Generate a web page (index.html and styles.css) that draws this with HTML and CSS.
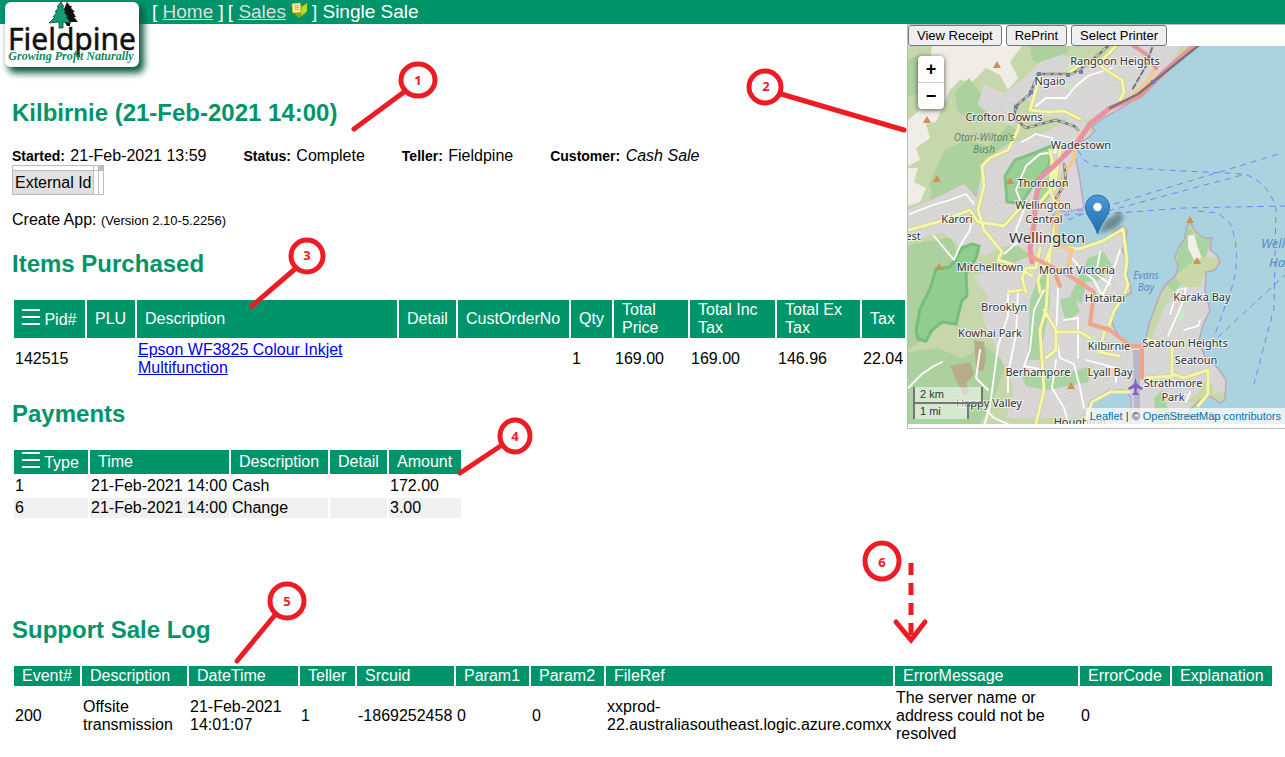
FILE: index.html
```html
<!DOCTYPE html>
<html lang="en">
<head>
<meta charset="utf-8">
<title>Single Sale</title>
<link rel="stylesheet" href="styles.css">
</head>
<body>
<header class="topbar">
  <a class="logo" href="#" aria-label="Fieldpine">
    <svg class="logo-art" viewBox="0 0 134 65">
      <path fill="#111" d="M62 0l3 4 2 0-1 2 4 4-2 0 3 5-2 0 4 5-8 0 0 4-3 0-6-10z"/>
      <path fill="#159a72" stroke="#0b4f3a" stroke-width="0.800" d="M56 0l-4 5 2 0-4 5 2 0-4 5 2 0-6 6 10-1 0 6 4 0 0-6 8 1-5-6 2 0-4-5 2 0-4-5 2 0z"/>
      <text class="logo-name" x="67" y="48" text-anchor="middle">Fieldpine</text>
      <text class="logo-tag" x="66" y="58" text-anchor="middle">Growing Profit Naturally</text>
    </svg>
  </a>
  <nav class="crumbs">
    <span>[ <a href="#">Home</a> ]</span>
    <span>[ <a href="#">Sales</a></span>
    <svg class="crumb-icon" viewBox="0 0 18 18">
      <path fill="#6fae1c" d="M8 3l5 2 4-3 0 9-8 6-4-3z"/>
      <path fill="#b7dd3c" d="M12 6l5-4 0 8-6 5z"/>
      <path fill="#fff6c8" stroke="#e8b820" stroke-width="1" d="M2 3l8-1 1 9-8 1z"/>
      <path stroke="#e59b2c" stroke-width="1" d="M4 5l5-.5M4 7l5-.5M4.500 9l5-.5"/>
    </svg>
    <span>] Single Sale</span>
  </nav>
</header>

<main class="page">
  <div class="upper">
    <div class="sale">
      <h2>Kilbirnie (21-Feb-2021 14:00)</h2>
      <div class="facts">
        <span><b>Started:</b> 21-Feb-2021 13:59</span>
        <span><b>Status:</b> Complete</span>
        <span><b>Teller:</b> Fieldpine</span>
        <span><b>Customer:</b> <i>Cash Sale</i></span>
      </div>
      <table class="ext">
        <tr class="ext-top"><td></td><td></td><td class="ext-fill"></td></tr>
        <tr><td class="ext-name">External Id</td><td></td><td></td></tr>
      </table>
      <p class="app">Create App: <small>(Version 2.10-5.2256)</small></p>

      <h2>Items Purchased</h2>
      <table class="grid items">
        <colgroup><col class="w71"><col class="w48"><col><col class="w57"><col class="w111"><col class="w41"><col class="w74"><col class="w85"><col class="w83"><col class="w43"></colgroup>
        <thead><tr>
          <th><svg class="burger" viewBox="0 0 18 16"><path d="M0 1h18M0 8h18M0 15h18"/></svg> Pid#</th>
          <th>PLU</th><th>Description</th><th>Detail</th><th>CustOrderNo</th><th>Qty</th><th>Total Price</th><th>Total Inc Tax</th><th>Total Ex Tax</th><th>Tax</th>
        </tr></thead>
        <tbody><tr>
          <td>142515</td><td></td><td class="desc"><a href="#">Epson WF3825 Colour Inkjet Multifunction</a></td><td></td><td></td><td>1</td><td>169.00</td><td>169.00</td><td>146.96</td><td>22.04</td>
        </tr></tbody>
      </table>

      <h2>Payments</h2>
      <table class="grid payments">
        <colgroup><col class="w74"><col class="w139"><col class="w97"><col class="w57"><col class="w72"></colgroup>
        <thead><tr>
          <th><svg class="burger" viewBox="0 0 18 16"><path d="M0 1h18M0 8h18M0 15h18"/></svg> Type</th>
          <th>Time</th><th>Description</th><th>Detail</th><th>Amount</th>
        </tr></thead>
        <tbody>
          <tr><td>1</td><td>21-Feb-2021 14:00</td><td>Cash</td><td></td><td>172.00</td></tr>
          <tr class="alt"><td>6</td><td>21-Feb-2021 14:00</td><td>Change</td><td></td><td>3.00</td></tr>
        </tbody>
      </table>
    </div>

    <aside class="side">
      <div class="actions">
        <button type="button">View Receipt</button>
        <button type="button">RePrint</button>
        <button type="button">Select Printer</button>
      </div>
      <div class="map">
        <svg class="map-art" viewBox="908 46 377 378" preserveAspectRatio="xMidYMid slice" role="img" aria-label="Map of Wellington">
          <defs>
            <pattern id="streets" width="13" height="11" patternUnits="userSpaceOnUse" patternTransform="rotate(22)">
              <rect width="13" height="11" fill="#d9d8d7"/>
              <path d="M0 3h13M4 0v11M0 8h9M9 3v8" stroke="#bfbebd" stroke-width="1.600" fill="none"/>
              <path d="M0 3h13M4 0v11M0 8h9M9 3v8" stroke="#ececec" stroke-width="0.800" fill="none"/>
            </pattern>
            <linearGradient id="pin" x1="0" y1="0" x2="0" y2="1">
              <stop offset="0" stop-color="#4a9bd3"/><stop offset="1" stop-color="#1d6bb0"/>
            </linearGradient>
            <filter id="soft"><feGaussianBlur stdDeviation="2"/></filter>
          </defs>
          <rect x="908" y="46" width="377" height="378" fill="#c6d7ab"/>
          <!-- open farmland -->
          <path fill="#f1ede6" d="M932 46L1022 46 1010 62 1018 78 1008 90 1000 75 986 68 972 82 960 80 950 90 942 108 936 122 926 124 930 138 916 148 920 160 908 166 908 120 922 108 920 92 934 88 944 74 930 62z"/>
          <path fill="#f1ede6" d="M908 168l10 0-4 14 12 6-6 14-12 4z"/>
          <!-- woodland -->
          <g fill="#add19e">
            <path d="M908 60l12-6 16 12 4 14-14 12-18 4z"/>
            <path d="M955 92l14-14 12 16 16 6-4 20-20 2-16-12z"/>
            <path d="M1030 46l40 0-6 14-18 8-14-8z"/>
            <path d="M945 150l20-10 24 6 20-22 10 8-18 26-20 14-4 30-12 6-10-12-20 2-6-14z"/>
            <path d="M935 182l26-16 18 14 4 34-14 8-20-14-20-4z"/>
            <path d="M1046 82l28 4 28-12 10 14-28 22-26-4z"/>
            <path d="M1120 46l20 0-4 18-14 14-8-14z"/>
            <path d="M908 245l44-8 8 24-24 34-10 44-18 10z"/>
            <path d="M908 352l30-4 24 10 24-12 20 18-12 34-14 26-72 0z"/>
            <path d="M1010 245l20 4-6 24-20 6-8-16z"/>
          </g>
          <!-- suburbs -->
          <g fill="url(#streets)">
            <path d="M1024 78l16-16 24-8 20 14 22-8 14-14 60 0-14 30-26 26-32 14-26 4-40-4-14-16-18 4-6-10z"/>
            <path d="M984 84l22 10 14 22-8 10-22-10-12-12z"/>
            <path d="M984 160l24-16 34-10 40-22 8 22-14 16 4 40 6 20-26 4 0 40-22 6-20-14-14 0-20 10-14-20z"/>
            <path d="M908 210l32-14 24-12 20 22 6 28-28 14-20-16-34 10z"/>
            <path d="M1000 268l26-10 34-10 36-4 28-14 6 60-18 24 0 14 40 10 12-30 30-40 14-20 14 16-10 60 10 34 18 14-8 18-34 8-20 20-172 0 8-30-18-40-14-30 6-20-14-22z"/>
          </g>
          <!-- parks and town belt -->
          <path fill="#9bcf95" stroke="#83c183" stroke-width="3" d="M1005 176l10-16 22-8 14-6-2 20-14 16-14 22-14-2z"/>
          <path fill="#8fce8e" stroke="#79bd7c" stroke-width="3" d="M962 248l10-4 7 2-3 12-10 16 1 22-5 4-6 24-14-2-10 8-6 11-8-2-2-8 4-22 10-20 6-20 14-2 6-8z"/>
          <g fill="#a9d3a0">
            <path d="M1044 180l10-8 4 14-14 18-10-4z"/>
            <path d="M1030 300l8-22 8-8 4 30-10 60-12 0z"/>
            <path d="M1088 258l16-6 8 14-12 14-14 2-4 22-12-8z"/>
            <path d="M1022 376l20-8 20 6 30-8-4 16-40 8-22-4z"/>
            <path d="M1060 300l14-4 6 16-14 10z"/>
            <path d="M1188 226l8 10 16 2-6 18-10 10-22 26-8-8 10-12 2-20z"/>
            <path d="M1154 398l8-8 6 20 0 14-12 0z"/>
          </g>
          <g fill="#c8e9c8"><path d="M1066 68l8-4 4 8-8 4z"/><path d="M1066 82l8 2-2 8-6-4z"/><path d="M1086 338l10-4 2 22-8-4z"/><path d="M1180 310l5-3-2 16-5-3z"/></g>
          <path fill="#b7ad8c" d="M974 340l10 2 2 16-3 14-7-4-1-14zM950 366l20-4 4 12-8 10 4 8-6 4-8-16z"/>
          <path fill="#c9d8a6" d="M1174 276l18-14 14-6 14 4-2 10-12 2-6 14-16 2zM1184 402l14-8 4-12 10 2 2 12-14 6z"/>
          <path fill="#f3efe6" d="M1188 236l6-2 4 14 4 10-8 2-6-12z"/>
          <!-- port and airport -->
          <path fill="#dbd5da" d="M1068 160l8-12 6 60-20 4-4-20z"/>
          <path fill="#d8d5dd" d="M1132 350l8 0 6 40 4 34-18 0z"/>
          <path fill="#b9b7cb" d="M1133 350l7 0 0 74-6 0z"/>
          <!-- harbour and bays -->
          <g fill="#aad3df" stroke="#b8a8c0" stroke-width="1.500">
            <path d="M1198 44L1175 63 1160 78 1145 92 1125 106 1105 117 1092 127 1095 131 1088 138 1076 144 1075 155 1080 180 1084 208 1067 212 1057 210 1052 217 1055 242 1065 248 1080 248 1095 244 1108 238 1115 231 1123 226 1127 230 1126 240 1122 250 1128 262 1127 275 1131 288 1131 293 1124 297 1120 303 1113 310 1112 321 1115 330 1120 337 1128 344 1142 346 1147 334 1149 324 1155 308 1160 294 1166 284 1176 275 1178 266 1175 258 1178 248 1185 238 1186 228 1190 222 1196 232 1204 238 1212 238 1210 250 1217 255 1220 262 1215 270 1206 272 1205 290 1210 310 1203 325 1199 340 1205 357 1218 368 1226 380 1225 400 1220 403 1210 396 1200 400 1190 410 1182 426 1290 426 1290 44z"/>
            <path d="M1084 426L1090 402 1108 391 1124 390 1131 397 1131 426z"/>
          </g>
          <g fill="none" stroke-linejoin="round" stroke-linecap="round">
            <!-- minor roads -->
            <g stroke="#fff" stroke-width="1.800">
              <path d="M1022 142l14-8 16 4 4 14-16 2-14 12-10 24 8 20-8 20 4 10-16 14"/>
              <path d="M934 236l20 24 6-14 10-16 2-12M910 214l20-8 20-6 16-6 8 10"/>
              <path d="M1008 290l0 26-10 30-8 60-6 20M1018 290l-2 44-8 40 0 18M1044 290l-10 20-4 40-6 16 20 4M1056 360l-4 28 12 20 4 14"/>
              <path d="M1058 288l-2 50 4 20 14 6 6 24 4 20M1072 258l10 12 12 10 8 16 8-16 10-30"/>
              <path d="M1036 106l10-8 20 0 10-12 12-10 24-8"/>
              <path d="M1168 336l14-32 4-16-8 2-8 24M1184 330l14-4 2-6"/>
              <path d="M908 388l14-14 12-8 8-4M984 408l10 10 14 6M1100 252l-4 22 14 10M1064 320l14-2 0 40M1086 360l30 8 0 14"/>
              <path d="M1186 402l4-10M980 350l-4 28 12 12"/>
            </g>
            <!-- secondary roads -->
            <g id="secondary" stroke="#c9cb86" stroke-width="4.200">
              <path d="M1116 46l-14 14-24 6-14 10"/>
              <path d="M1040 76l-4 14-6 20 18 2 16-1 16 8"/>
              <path d="M1020 118l-2 12-10 20-18 8-8 8 2 20-6 24 6 20 18 22-4 8 14 4 20 12"/>
              <path d="M908 230l30-8 32-12 8 12 26 4 16-18 16-8"/>
              <path d="M1096 62l10 8 16 10 2 12-4 8"/>
              <path d="M1034 210l16-20 2-30M1050 150l4 20-4 20 8 20-8 40-12 30 2 12M1060 150l-6 40"/>
              <path d="M1050 250l-4 60-6 20 4 60-8 34M1044 310l12 20 0 20-10 8M1056 332l24 0 10 6"/>
              <path d="M1026 292l-4-14 4-10 10 0 4-20M1008 292l14-2"/>
              <path d="M1055 246l24 3 24-8 20-12 2 16 2 16-2 14 3 10-6 14-8 12-5 14"/>
              <path d="M1105 330l-6 22 20 4M1084 424l8-22 18-10 20 0M1148 340l24 4 0 30 12 4 24-8 0 24-10 12M1145 378l28-2"/>
            </g>
            <g stroke="#f4f7a7" stroke-width="3">
              <path d="M1116 46l-14 14-24 6-14 10"/>
              <path d="M1040 76l-4 14-6 20 18 2 16-1 16 8"/>
              <path d="M1020 118l-2 12-10 20-18 8-8 8 2 20-6 24 6 20 18 22-4 8 14 4 20 12"/>
              <path d="M908 230l30-8 32-12 8 12 26 4 16-18 16-8"/>
              <path d="M1096 62l10 8 16 10 2 12-4 8"/>
              <path d="M1034 210l16-20 2-30M1050 150l4 20-4 20 8 20-8 40-12 30 2 12M1060 150l-6 40"/>
              <path d="M1050 250l-4 60-6 20 4 60-8 34M1044 310l12 20 0 20-10 8M1056 332l24 0 10 6"/>
              <path d="M1026 292l-4-14 4-10 10 0 4-20M1008 292l14-2"/>
              <path d="M1055 246l24 3 24-8 20-12 2 16 2 16-2 14 3 10-6 14-8 12-5 14"/>
              <path d="M1105 330l-6 22 20 4M1084 424l8-22 18-10 20 0M1148 340l24 4 0 30 12 4 24-8 0 24-10 12M1145 378l28-2"/>
            </g>
            <!-- primary roads -->
            <g stroke="#f6c98b" stroke-width="4">
              <path d="M1154 70l-6 12-20 18-20 10-18 14-12 14"/><path d="M1076 142l-2 16-12 20-4 20-2 40M1054 244l18 6-4 16"/>
            </g>
            <path stroke="#e892a2" stroke-width="5" d="M1196 44l-32 28-24 24-30 12-20 16-12 18-22 22-16 14-4 20-2 26-4 24 2 14"/>
            <path stroke="#e892a2" stroke-width="4" d="M1134 46l12 8 10 14"/>
            <path stroke="#f3a28b" stroke-width="4" d="M1030 256l20 10 20 10 24 16-4 32 20 6 20 16 12 0 0 32M1056 276l4 10"/>
            <!-- railway -->
            <path stroke="#777" stroke-width="2.500" d="M1038 74l34 0 16-10 20-18M1038 74l-8 20-14 12-2 12 12 10 30-8 18 6 4 4M1198 46l-40 32-20 16-28 14M1064 164l2 18-10 16"/>
            <path stroke="#ddd" stroke-width="1.200" stroke-dasharray="4 4" d="M1038 74l34 0 16-10 20-18M1038 74l-8 20-14 12-2 12 12 10 30-8 18 6 4 4M1064 164l2 18-10 16"/>
            <path stroke="#777" stroke-width="2" stroke-dasharray="5 3" d="M1152 48l-6 18-14 24"/>
            <!-- ferry routes -->
            <g stroke="#7b80f2" stroke-width="1" stroke-dasharray="6 5" stroke-linecap="butt">
              <path d="M1078 150l6 10 10 6 70 4 80 4q24 8 32 34l-2 100-20 76"/>
              <path d="M1114 204l168-51M1108 211l134-36M1104 214l80-6 101-2M1198 211l20 2 12 10q12 30 2 64l-18 50M1218 337l67-62"/>
              <path d="M1064 215l30-2M1066 209l26 2M1068 220l20-8"/>
            </g>
          </g>
          <g fill="#6c7cbd"><path d="M1037 72h4v4h-4zM1066 73h4v4h-4zM1079 70h4v4h-4zM1029 90h4v4h-4zM1014 105h4v4h-4zM1151 80h4v4h-4z"/></g>
          <g fill="#d08f55"><path d="M997 61l4 7h-8zM927 116l4 7h-8zM937 175l4 7h-8zM1010 177l4 7h-8zM939 263l4 7h-8zM1071 382l4 7h-8zM1190 216l4 7h-8zM1197 257l4 7h-8z"/></g>
          <path fill="#8461c4" d="M1135.500 378l1.500 6 6 4-1 2-5-2-.5 4 3 3-8 0 3-3-.5-4-5 2-1-2 6-4z"/>
          <g class="places" text-anchor="middle">
            <text x="1115" y="65">Rangoon Heights</text>
            <text x="1050" y="85">Ngaio</text>
            <text x="1004" y="121">Crofton Downs</text>
            <text x="1081" y="149">Wadestown</text>
            <text x="1043" y="187">Thorndon</text>
            <text x="1043" y="209">Wellington</text>
            <text x="1044" y="223">Central</text>
            <text x="957" y="223">Karori</text>
            <text x="913" y="240">est</text>
            <text class="city" x="1047" y="243">Wellington</text>
            <text x="990" y="271">Mitchelltown</text>
            <text x="1077" y="274">Mount Victoria</text>
            <text x="1105" y="302">Hataitai</text>
            <text x="1004" y="311">Brooklyn</text>
            <text x="990" y="337">Kowhai Park</text>
            <text x="1109" y="350">Kilbirnie</text>
            <text x="1202" y="301">Karaka Bay</text>
            <text x="1185" y="347">Seatoun Heights</text>
            <text x="1196" y="364">Seatoun</text>
            <text x="1038" y="376">Berhampore</text>
            <text x="1110" y="376">Lyall Bay</text>
            <text x="1173" y="387">Strathmore</text>
            <text x="1173" y="401">Park</text>
            <text x="989" y="407">Happy Valley</text>
            <text x="1080" y="426">Houghton</text>
            <text x="1196" y="420">Breaker Bay</text>
          </g>
          <g class="nature" text-anchor="middle">
            <text class="bush" x="984" y="141">Otari-Wilton's</text>
            <text class="bush" x="984" y="153">Bush</text>
            <text x="1146" y="279">Evans</text>
            <text x="1146" y="291">Bay</text>
          </g>
          <g class="harbour"><text x="1261" y="248">Wellington</text><text x="1269" y="267">Harbour</text></g>
          <path filter="url(#soft)" fill="#000" opacity="0.350" d="M1098 234l8-14 14-8 4 6-8 10z"/>
          <path fill="url(#pin)" stroke="#2a6ea8" d="M1097.500 234C1094 222 1085.500 216 1085.500 207a12 12 0 0 1 24 0C1109.500 216 1101 222 1097.500 234z"/>
          <circle cx="1097.500" cy="207" r="4.200" fill="#fff"/>
        </svg>
        <div class="zoom">
          <button type="button" aria-label="Zoom in">+</button>
          <button type="button" aria-label="Zoom out">−</button>
        </div>
        <div class="scale"><span class="km">2 km</span><span class="mi">1 mi</span></div>
        <div class="credit"><a href="#">Leaflet</a> | © <a href="#">OpenStreetMap contributors</a></div>
      </div>
    </aside>
  </div>

  <section class="log">
    <h2>Support Sale Log</h2>
    <table class="grid">
      <colgroup><col class="w66"><col class="w105"><col class="w109"><col class="w55"><col class="w97"><col class="w73"><col class="w73"><col class="w287"><col><col class="w90"><col class="w100"></colgroup>
      <thead><tr><th>Event#</th><th>Description</th><th>DateTime</th><th>Teller</th><th>Srcuid</th><th>Param1</th><th>Param2</th><th>FileRef</th><th>ErrorMessage</th><th>ErrorCode</th><th>Explanation</th></tr></thead>
      <tbody><tr>
        <td>200</td><td>Offsite transmission</td><td>21-Feb-2021 14:01:07</td><td>1</td><td>-1869252458</td><td>0</td><td>0</td><td>xxprod-<br>22.australiasoutheast.logic.azure.comxx</td><td class="message">The server name or address could not be resolved</td><td>0</td><td></td>
      </tr></tbody>
    </table>
  </section>

  <svg class="notes" width="1285" height="757" viewBox="0 0 1285 757">
    <g class="ink">
      <ellipse cx="418" cy="80" rx="17" ry="16"/><path d="M404 92L354 129"/>
      <ellipse cx="765" cy="87" rx="16" ry="16"/><path d="M781 94L904 130"/>
      <ellipse cx="307" cy="256" rx="16" ry="16"/><path d="M295 269L252 306"/>
      <ellipse cx="515" cy="436" rx="15" ry="16"/><path d="M502 445L460 473"/>
      <ellipse cx="287" cy="601" rx="17" ry="17"/><path d="M275 615L237 661"/>
      <ellipse cx="882" cy="561" rx="17" ry="18"/>
      <path class="dashes" d="M911 563V640"/><path d="M896 622L911 640 925 622"/>
    </g>
    <g class="marks" text-anchor="middle">
      <text x="418" y="85">1</text><text x="766" y="91">2</text><text x="307" y="260">3</text><text x="515" y="441">4</text><text x="287" y="606">5</text><text x="882" y="567">6</text>
    </g>
  </svg>
</main>
</body>
</html>
```
FILE: styles.css
```css
* { box-sizing: border-box; }
body {
  margin: 0;
  background: #fff;
  color: #000;
  font: 16px/18px "Liberation Sans", Arial, sans-serif;
}
.topbar {
  position: relative;
  z-index: 2;
  display: flex;
  height: 24px;
  padding-left: 152px;
  background: #00946b;
  color: #fff;
}
.logo {
  position: absolute;
  left: 5px;
  top: 2px;
  width: 134px;
  height: 65px;
  border-radius: 6px;
  background: #fff;
  box-shadow: 4px 5px 7px 1px #0a5c45;
}
.logo-art { display: block; width: 100%; height: 100%; }
.logo-name { font: 30px "Noto Sans", sans-serif; fill: #111; stroke: #111; stroke-width: 0.5px; }
.logo-tag { font: italic bold 12px "Liberation Serif", serif; fill: #0f8a64; }
.crumbs { display: flex; align-items: center; gap: 4px; font-size: 19px; line-height: 24px; }
.crumbs a { color: #ddd; }
.crumb-icon { width: 18px; height: 18px; margin-bottom: 4px; }

.page { position: relative; }
.upper { display: grid; grid-template-columns: minmax(0, 1fr) 378px; }
.sale { padding: 55px 0 0 12px; }
h2 { margin: 20px 0; font-size: 24px; line-height: 28px; color: #00946b; }
.facts { display: flex; gap: 37px; height: 18px; white-space: nowrap; }
.facts b { margin-right: 1px; font-size: 14px; }
.ext { border-collapse: collapse; }
.ext td { border: 1px solid #bdbdbd; padding: 0 2px; }
.ext .ext-top td { height: 5px; }
.ext tr + tr td { height: 24px; }
.ext .ext-fill { background: #bdbdbd; }
.ext .ext-name { background: #e0e0e0; }
.app { margin: 16px 0 20px; }
.app small { font-size: 13px; }

.grid { border-spacing: 2px; table-layout: fixed; width: 100%; }
.grid th { padding: 1px 8px; background: #00946b; color: #fff; font-weight: normal; text-align: left; }
.grid td { padding: 1px; }
.grid .alt td { background: #f0f0f0; }
.grid .desc { padding-right: 50px; }
.desc a { color: #0000ee; }
.payments { width: 451px; }
.payments td { white-space: nowrap; }
.payments th { height: 24px; }
.burger { width: 18px; height: 16px; fill: none; stroke: #fff; stroke-width: 2; }
.w41 { width: 41px; } .w43 { width: 43px; } .w48 { width: 48px; } .w55 { width: 55px; }
.w57 { width: 57px; } .w66 { width: 66px; } .w71 { width: 71px; } .w72 { width: 72px; }
.w73 { width: 73px; } .w74 { width: 74px; } .w83 { width: 83px; } .w85 { width: 85px; }
.w90 { width: 90px; } .w97 { width: 97px; } .w100 { width: 100px; } .w105 { width: 105px; }
.w109 { width: 109px; } .w111 { width: 111px; } .w139 { width: 139px; } .w287 { width: 287px; }

.side { align-self: start; border: solid #bdbdbd; border-width: 1px 0 1px 1px; padding-bottom: 4px; }
.actions { display: flex; gap: 4px; height: 21px; }
.actions button {
  padding: 0 8px;
  border: 1px solid #767676;
  border-radius: 3px;
  background: #efefef;
  color: #000;
  font: 13px "Liberation Sans", Arial, sans-serif;
}
.map { position: relative; overflow: hidden; }
.map-art { display: block; width: 100%; height: 378px; }
.places text { font: 11px "Noto Sans", sans-serif; fill: #333; stroke: rgba(255, 255, 255, 0.7); stroke-width: 2px; paint-order: stroke; }
.places .city { font-size: 15px; }
.nature text { font: italic 10px "Noto Sans", sans-serif; fill: #5b8cc4; }
.nature .bush { fill: #5d8566; }
.harbour text { font: italic 13px "Noto Sans", sans-serif; fill: #5b8cc4; }
.zoom { position: absolute; left: 10px; top: 10px; width: 26px; border-radius: 4px; background: #fff; box-shadow: 0 1px 5px rgba(0, 0, 0, 0.65); }
.zoom button { display: block; width: 26px; height: 26px; padding: 0; border: 0; background: none; color: #000; font: bold 18px/26px "Liberation Sans", Arial, sans-serif; }
.zoom button + button { height: 27px; border-top: 1px solid #ccc; }
.scale { position: absolute; left: 5px; bottom: 5px; display: flex; flex-direction: column; align-items: flex-start; font-size: 11px; line-height: 15px; color: #333; }
.scale span { padding: 0 5px; border: 2px solid #777; background: rgba(255, 255, 255, 0.5); }
.scale .km { width: 70px; border-top: 0; }
.scale .mi { width: 56px; border-top: 0; border-bottom: 0; }
.credit { position: absolute; right: 0; bottom: 0; padding: 0 4px; background: rgba(255, 255, 255, 0.7); font-size: 11px; line-height: 16px; color: #333; white-space: nowrap; }
.credit a { color: #0078a8; text-decoration: none; }

.log { margin-top: 96px; padding: 0 11px 11px 12px; }
.log .message { padding-right: 24px; }

.notes { position: absolute; left: 0; top: -24px; pointer-events: none; }
.ink { fill: none; stroke: #ed1c24; stroke-width: 5; stroke-linecap: round; }
.ink .dashes { stroke-dasharray: 12 8; stroke-linecap: butt; }
.marks text { font: bold 13px "Noto Sans", sans-serif; fill: #ed1c24; }
```
